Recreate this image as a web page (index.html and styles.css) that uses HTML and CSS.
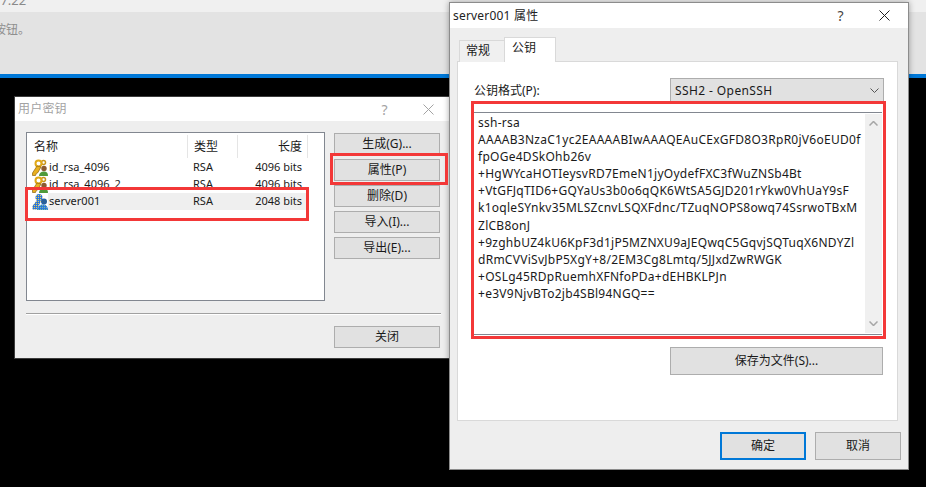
FILE: index.html
```html
<!DOCTYPE html>
<html lang="zh-CN">
<head>
<meta charset="utf-8">
<title>用户密钥</title>
<link rel="stylesheet" href="styles.css">
</head>
<body>
<svg class="defs" width="0" height="0" aria-hidden="true">
  <defs>
    <pattern id="hatch" width="2" height="2" patternUnits="userSpaceOnUse">
      <rect width="2" height="2" fill="#2f78d8"/>
      <rect width="1" height="1" fill="#f0d050"/>
    </pattern>
    <pattern id="hatch-low" width="2" height="2" patternUnits="userSpaceOnUse">
      <rect width="2" height="2" fill="#2f78d8"/>
      <rect width="1" height="1" fill="#7cc0a0"/>
    </pattern>
    <symbol id="key-user" viewBox="0 0 16 17">
      <circle cx="11.500" cy="3.500" r="2" fill="none" stroke="#c8961c" stroke-width="1.500"/>
      <circle cx="6.500" cy="4.500" r="3" fill="none" stroke="#e0a818" stroke-width="2"/>
      <path d="M5 7 .5 14v2.500h3l.8-2 1.500-.8L9 8z" fill="#e8b020" stroke="#8f6410" stroke-width=".7"/>
      <circle cx="12" cy="9.500" r="2.700" fill="#8a5a30"/>
      <path d="M7 17c0-3 2-4.500 5-4.500s4 1.500 4 4.500z" fill="#4f9a3a"/>
    </symbol>
    <symbol id="key-server" viewBox="0 0 16 17">
      <circle cx="7" cy="4.500" r="3.500" fill="url(#hatch)"/>
      <path d="M5 7 .5 13v3.500H5L9 8z" fill="url(#hatch)"/>
      <circle cx="12" cy="8.500" r="3" fill="#2a5f98"/>
      <path d="M5 17c0-3.500 3-5.500 6-5.500s5 2 5 5.500z" fill="url(#hatch-low)"/>
    </symbol>
  </defs>
</svg>

<div class="desktop">
  <header class="backdrop">
    <div class="backdrop-time"><span class="cut">17:22</span></div>
    <div class="backdrop-note"><span class="cut-note">按钮。</span></div>
    <div class="backdrop-rule"></div>
  </header>

  <section class="window keys-window">
    <div class="titlebar titlebar-inactive">
      <span class="title">用户密钥</span>
      <span class="help">?</span>
      <svg class="close" viewBox="0 0 11 11"><path d="M.5.5l10 10M10.500.5l-10 10"/></svg>
    </div>
    <div class="keys-body">
      <div class="keys-main">
        <div class="list">
          <div class="list-head">
            <span class="col-name">名称</span>
            <span class="col-type">类型</span>
            <span class="col-len">长度</span>
          </div>
          <div class="list-row">
            <svg class="row-icon"><use href="#key-user"/></svg>
            <div class="row-cells"><span>id_rsa_4096</span><span>RSA</span><span class="num">4096 bits</span></div>
          </div>
          <div class="list-row">
            <svg class="row-icon"><use href="#key-user"/></svg>
            <div class="row-cells"><span>id_rsa_4096_2</span><span>RSA</span><span class="num">4096 bits</span></div>
          </div>
          <div class="list-row">
            <svg class="row-icon"><use href="#key-server"/></svg>
            <div class="row-cells row-selected"><span>server001</span><span>RSA</span><span class="num">2048 bits</span></div>
          </div>
        </div>
        <div class="side-buttons">
          <button class="btn btn-small">生成(G)...</button>
          <button class="btn btn-small">属性(P)</button>
          <button class="btn btn-small">删除(D)</button>
          <button class="btn btn-small">导入(I)...</button>
          <button class="btn btn-small">导出(E)...</button>
        </div>
      </div>
      <div class="separator"></div>
      <div class="keys-foot"><button class="btn btn-small">关闭</button></div>
    </div>
  </section>

  <section class="window props-window">
    <div class="titlebar">
      <span class="title">server001 属性</span>
      <span class="help">?</span>
      <svg class="close" viewBox="0 0 11 11"><path d="M.5.5l10 10M10.500.5l-10 10"/></svg>
    </div>
    <div class="props-body">
      <div class="tabs">
        <span class="tab">常规</span>
        <span class="tab tab-active">公钥</span>
      </div>
      <div class="tab-page">
        <div class="format-row">
          <span class="format-label">公钥格式(P):</span>
          <div class="combo">
            <span class="combo-text">SSH2 - OpenSSH</span>
            <svg class="chevron" viewBox="0 0 9 5"><path d="M.5.500l4 4 4-4"/></svg>
          </div>
        </div>
        <div class="keybox">
          <div class="keytext">
            <div>ssh-rsa</div>
            <div>AAAAB3NzaC1yc2EAAAABIwAAAQEAuCExGFD8O3RpR0jV6oEUD0f</div>
            <div>fpOGe4DSkOhb26v</div>
            <div>+HgWYcaHOTIeysvRD7EmeN1jyOydefFXC3fWuZNSb4Bt</div>
            <div>+VtGFJqTID6+GQYaUs3b0o6qQK6WtSA5GJD201rYkw0VhUaY9sF</div>
            <div>k1oqleSYnkv35MLSZcnvLSQXFdnc/TZuqNOPS8owq74SsrwoTBxM</div>
            <div>ZlCB8onJ</div>
            <div>+9zghbUZ4kU6KpF3d1jP5MZNXU9aJEQwqC5GqvjSQTuqX6NDYZl</div>
            <div>dRmCVViSvJbP5XgY+8/2EM3Cg8Lmtq/5JJxdZwRWGK</div>
            <div>+OSLg45RDpRuemhXFNfoPDa+dEHBKLPJn</div>
            <div>+e3V9NjvBTo2jb4SBl94NGQ==</div>
          </div>
          <div class="scrollbar">
            <svg class="arrow" viewBox="0 0 9 5"><path d="M.5 4.500l4-4 4 4"/></svg>
            <svg class="arrow" viewBox="0 0 9 5"><path d="M.5.500l4 4 4-4"/></svg>
          </div>
        </div>
        <div class="save-row"><button class="btn btn-save">保存为文件(S)...</button></div>
      </div>
      <div class="props-foot">
        <button class="btn btn-large btn-default">确定</button>
        <button class="btn btn-large">取消</button>
      </div>
    </div>
  </section>

  <div class="mark mark-row"></div>
  <div class="mark mark-button"></div>
  <div class="mark mark-key"></div>
</div>
</body>
</html>
```
FILE: styles.css
```css
* { box-sizing: border-box; }
html, body { margin: 0; padding: 0; background: #000; }
body {
  width: 926px;
  height: 487px;
  overflow: hidden;
  font-family: "Noto Sans", "Noto Sans CJK SC", sans-serif;
  font-size: 12px;
  color: #1a1a1a;
}
.defs { position: absolute; }
.desktop { position: relative; width: 926px; height: 487px; overflow: hidden; background: #000; }

/* backdrop */
.backdrop { display: flex; flex-direction: column; height: 78px; }
.backdrop-time { height: 12px; background: #f0f0f0; color: #8a8a8a; overflow: hidden; line-height: 14px; font-size: 13px; }
.cut { display: block; margin: -7px 0 0 -7px; }
.backdrop-note { height: 62px; background: #e3e3e3; color: #8f8f8f; padding-top: 11px; line-height: 14px; overflow: hidden; }
.cut-note { display: block; margin-left: -6px; }
.backdrop-rule { height: 4px; background: #0078d7; }

/* windows */
.window {
  position: absolute;
  display: flex;
  flex-direction: column;
  background: #eee;
  border: 1px solid #5a5a5a;
}
.keys-window { left: 14px; top: 96px; width: 436px; height: 263px; border-color: #3c3c3c; }
.props-window { left: 449px; top: 2px; width: 460px; height: 468px; border-color: #8c8c8c; box-shadow: 0 0 6px rgba(0, 0, 0, .35); }

.titlebar { display: flex; align-items: center; height: 25px; background: #fff; padding-left: 3px; flex: none; color: #222; }
.titlebar-inactive { height: 24px; color: #a3a3a3; }
.title { flex: 1; font-size: 12px; line-height: 16px; letter-spacing: .2px; }
.help { width: 13px; font-size: 14px; text-align: center; margin-right: 32px; color: #444; }
.titlebar-inactive .help { color: #a3a3a3; }
.close { width: 11px; height: 11px; margin-right: 18px; fill: none; stroke: #222; }
.titlebar-inactive .close { stroke: #a3a3a3; margin-right: 15px; }

.btn {
  display: block;
  padding: 0;
  font: inherit;
  color: #1a1a1a;
  background: #e1e1e1;
  border: 1px solid #adadad;
  border-radius: 0;
  text-align: center;
}
.btn-small { width: 106px; height: 22px; line-height: 18px; }

/* user keys */
.keys-body { flex: 1; display: flex; flex-direction: column; padding: 11px 7px 0 11px; }
.keys-main { display: flex; gap: 9px; height: 169px; }
.list { width: 299px; height: 169px; background: #fff; border: 1px solid #828790; flex: none; }
.list-head { display: grid; grid-template-columns: 161px 50px 70px; height: 25px; align-items: center; padding-bottom: 1px; margin-top: 1px; line-height: 24px; }
.list-head span { height: 23px; border-right: 1px solid #e5e5e5; }
.col-name { padding-left: 7px; }
.col-type { padding-left: 6px; }
.col-len { text-align: right; padding-right: 5px; }
.list-row { display: flex; height: 17px; padding-left: 5px; align-items: center; }
.row-icon { width: 16px; height: 17px; flex: none; overflow: visible; }
.row-cells { display: grid; grid-template-columns: 144px 50px 63px; width: 258px; height: 17px; line-height: 16px; padding-left: 1px; font-size: 11px; }
.row-selected { background: #efefef; }
.num { text-align: right; padding-right: 4px; }
.side-buttons { display: flex; flex-direction: column; gap: 4px; padding-top: 1px; }
.separator { height: 2px; width: 415px; margin-top: 12px; background: #a0a0a0; border-bottom: 1px solid #fff; }
.keys-foot { padding: 11px 0 0 308px; }

/* properties */
.props-body { flex: 1; display: flex; flex-direction: column; padding: 9px 10px 0 7px; }
.tabs { display: flex; align-items: flex-end; height: 25px; padding-left: 2px; position: relative; z-index: 1; flex: none; }
.tab { width: 46px; height: 22px; background: #f0f0f0; border: 1px solid #d9d9d9; border-bottom: 0; padding: 1px 0 0 6px; line-height: 18px; }
.tab-active { width: 52px; height: 25px; background: #fff; padding: 1px 0 0 7px; margin-left: -1px; }
.tab-page { height: 360px; margin-top: -1px; background: #fff; border: 1px solid #d9d9d9; padding: 16px 15px 0 16px; flex: none; }
.format-row { display: flex; align-items: center; justify-content: space-between; height: 25px; margin-right: -2px; }
.format-label { line-height: 16px; }
.combo { display: flex; align-items: center; justify-content: space-between; width: 214px; height: 25px; background: #e1e1e1; border: 1px solid #adadad; padding: 0 4px 0 4px; }
.combo-text { letter-spacing: .4px; }
.chevron { width: 9px; height: 5px; fill: none; stroke: #555; }
.keybox { display: flex; justify-content: space-between; height: 223px; margin-top: 9px; background: #fff; border-top: 1px solid #828790; border-bottom: 1px solid #828790; }
.keytext { padding: 1px 0 0 4px; line-height: 17.1px; white-space: nowrap; letter-spacing: .27px; }
.scrollbar { display: flex; flex-direction: column; justify-content: space-between; align-items: center; width: 17px; margin: 1px 0; padding: 7px 0; background: #f0f0f0; flex: none; }
.arrow { width: 9px; height: 5px; fill: none; stroke: #a6a6a6; stroke-width: 1.500; }
.save-row { display: flex; justify-content: flex-end; margin: 12px -1px 0 0; }
.btn-save { width: 213px; height: 28px; padding-bottom: 2px; }
.props-foot { display: flex; justify-content: flex-end; gap: 9px; margin-top: 11px; margin-right: -3px; }
.btn-large { width: 86px; height: 28px; padding-bottom: 2px; }
.btn-default { border: 2px solid #0078d7; }

/* annotations */
.mark { position: absolute; border: 3px solid #f33838; }
.mark-row { left: 25px; top: 187px; width: 284px; height: 34px; }
.mark-button { left: 330px; top: 153px; width: 118px; height: 32px; }
.mark-key { left: 471px; top: 101px; width: 415px; height: 238px; }
```
